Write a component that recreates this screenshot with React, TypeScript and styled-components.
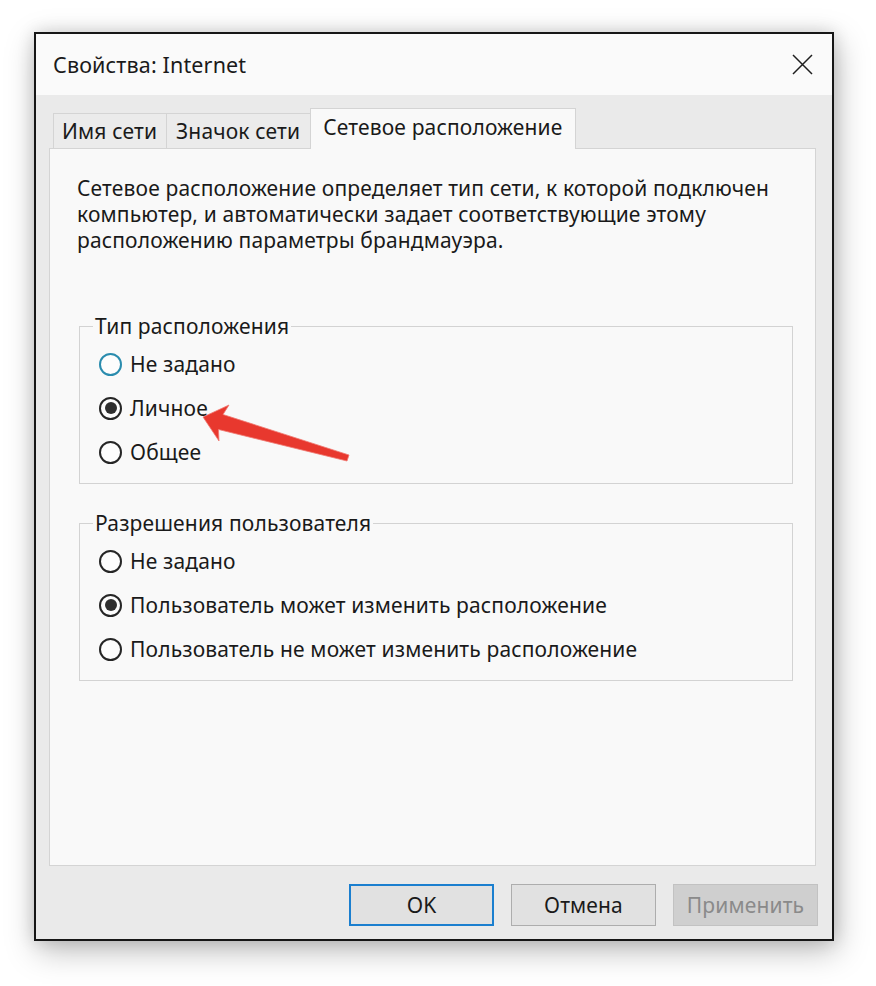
import React from 'react';
import styled, { createGlobalStyle } from 'styled-components';

const GlobalStyle = createGlobalStyle`
  html, body {
    margin: 0;
    padding: 0;
    background: #ffffff;
  }
  body {
    font-family: "Noto Sans", "Open Sans", sans-serif;
    color: #1a1a1a;
    letter-spacing: 0.15px;
  }
`;

const Page = styled.div`
  position: relative;
  width: 876px;
  height: 986px;
  padding: 32px 0 0 34px;
  box-sizing: border-box;
  overflow: hidden;
`;

const Window = styled.div`
  width: 800px;
  height: 909px;
  box-sizing: border-box;
  border: 2px solid #161616;
  background: #eaeaea;
  display: flex;
  flex-direction: column;
  box-shadow: 3px 10px 30px rgba(0, 0, 0, 0.26), 0 0 16px rgba(0, 0, 0, 0.14);
`;

const TitleBar = styled.div`
  height: 61px;
  flex-shrink: 0;
  background: #fafafa;
  display: flex;
  align-items: center;
  justify-content: space-between;
  padding: 0 19px 0 17px;
`;

const Title = styled.span`
  font-size: 21.5px;
  color: #1a1a1a;
`;

const CloseButton = styled.button`
  width: 22px;
  height: 22px;
  padding: 0;
  border: none;
  background: transparent;
  display: flex;
  align-items: center;
  justify-content: center;
`;

const Body = styled.div`
  flex: 1;
  display: flex;
  flex-direction: column;
  padding: 13px 16px 13px 13px;
`;

const TabRow = styled.div`
  display: flex;
  align-items: flex-end;
  padding-left: 4px;
  position: relative;
  z-index: 1;
  margin-bottom: -1px;
`;

const Tab = styled.div<{ $active?: boolean; $pad: number }>`
  height: ${(p) => (p.$active ? '41px' : '36px')};
  box-sizing: border-box;
  display: flex;
  align-items: center;
  padding: 0 ${(p) => p.$pad}px ${(p) => (p.$active ? '4px' : '0')} ${(p) => p.$pad - 1}px;
  border: 1px solid #d4d4d4;
  border-bottom: ${(p) => (p.$active ? 'none' : '1px solid #d4d4d4')};
  margin-right: -1px;
  background: ${(p) => (p.$active ? '#f9f9f9' : '#ebebeb')};
  font-size: 21px;
  color: #1a1a1a;
  white-space: nowrap;
`;

const Panel = styled.div`
  flex: 1;
  background: #f9f9f9;
  border: 1px solid #d4d4d4;
  padding: 26px 0 0 27px;
`;

const Description = styled.p`
  margin: 0;
  font-size: 21px;
  line-height: 26px;
  color: #1a1a1a;
`;

const Group = styled.fieldset<{ $gap: number }>`
  margin: ${(p) => p.$gap}px 22px 0 2px;
  padding: 3px 0 9px 19px;
  border: 1px solid #d3d3d3;
  min-width: 0;
`;

const Legend = styled.legend`
  margin-left: -6px;
  padding: 0 2px;
  font-size: 21px;
  line-height: 26px;
  color: #1a1a1a;
`;

const Option = styled.div`
  height: 44px;
  display: flex;
  align-items: center;
  gap: 8px;
  font-size: 21px;
  color: #1a1a1a;
`;

const Circle = styled.span<{ $checked?: boolean; $focus?: boolean }>`
  width: 23px;
  height: 23px;
  box-sizing: border-box;
  border-radius: 50%;
  border: 2px solid ${(p) => (p.$focus ? '#2a8cae' : '#262626')};
  background: #fdfdfd;
  display: flex;
  align-items: center;
  justify-content: center;
  flex-shrink: 0;

  &::after {
    content: '';
    width: 12px;
    height: 12px;
    border-radius: 50%;
    background: #2f2f2f;
    display: ${(p) => (p.$checked ? 'block' : 'none')};
  }
`;

const Footer = styled.div`
  display: flex;
  justify-content: flex-end;
  gap: 17px;
  margin: 18px -2px 0 0;
`;

const Button = styled.button<{ $primary?: boolean; $disabled?: boolean }>`
  width: 145px;
  height: 42px;
  box-sizing: border-box;
  font-family: "Noto Sans", "Open Sans", sans-serif;
  font-size: 21px;
  letter-spacing: 0.15px;
  color: ${(p) => (p.$disabled ? '#8a8a8a' : '#1a1a1a')};
  background: ${(p) => (p.$disabled ? '#cfcfcf' : '#e1e1e1')};
  border: ${(p) =>
    p.$primary ? '2px solid #1b7fcf' : p.$disabled ? '1px solid #c2c2c2' : '1px solid #adadad'};
  padding: 0;
`;

const Annotation = styled.svg`
  position: absolute;
  left: 0;
  top: 0;
  pointer-events: none;
`;

type Choice = { label: string; checked?: boolean; focus?: boolean };

const locationChoices: Choice[] = [
  { label: 'Не задано', focus: true },
  { label: 'Личное', checked: true },
  { label: 'Общее' },
];

const permissionChoices: Choice[] = [
  { label: 'Не задано' },
  { label: 'Пользователь может изменить расположение', checked: true },
  { label: 'Пользователь не может изменить расположение' },
];

function RadioGroup({ title, items, gap }: { title: string; items: Choice[]; gap: number }) {
  return (
    <Group $gap={gap}>
      <Legend>{title}</Legend>
      {items.map((item) => (
        <Option key={item.label}>
          <Circle $checked={item.checked} $focus={item.focus} />
          {item.label}
        </Option>
      ))}
    </Group>
  );
}

export default function App() {
  return (
    <>
      <GlobalStyle />
      <Page>
        <Window>
          <TitleBar>
            <Title>Свойства: Internet</Title>
            <CloseButton aria-label="Закрыть">
              <svg width="21" height="21" viewBox="0 0 21 21">
                <path d="M1 1 L20 20 M20 1 L1 20" stroke="#1e1e1e" strokeWidth="1.5" fill="none" />
              </svg>
            </CloseButton>
          </TitleBar>
          <Body>
            <TabRow>
              <Tab $pad={9}>Имя сети</Tab>
              <Tab $pad={10}>Значок сети</Tab>
              <Tab $active $pad={13}>Сетевое расположение</Tab>
            </TabRow>
            <Panel>
              <Description>
                Сетевое расположение определяет тип сети, к которой подключен
                <br />
                компьютер, и автоматически задает соответствующие этому
                <br />
                расположению параметры брандмауэра.
              </Description>
              <RadioGroup title="Тип расположения" items={locationChoices} gap={60} />
              <RadioGroup title="Разрешения пользователя" items={permissionChoices} gap={26} />
            </Panel>
            <Footer>
              <Button $primary>OK</Button>
              <Button>Отмена</Button>
              <Button $disabled>Применить</Button>
            </Footer>
          </Body>
        </Window>
        <Annotation width="876" height="986" viewBox="0 0 876 986">
          <polygon
            points="203,417 229,405 223,414.5 349,455 347,461 218.5,429.5 219,441"
            fill="#e8382e"
            stroke="#f07a72"
            strokeWidth="0.8"
            strokeLinejoin="round"
          />
        </Annotation>
      </Page>
    </>
  );
}
